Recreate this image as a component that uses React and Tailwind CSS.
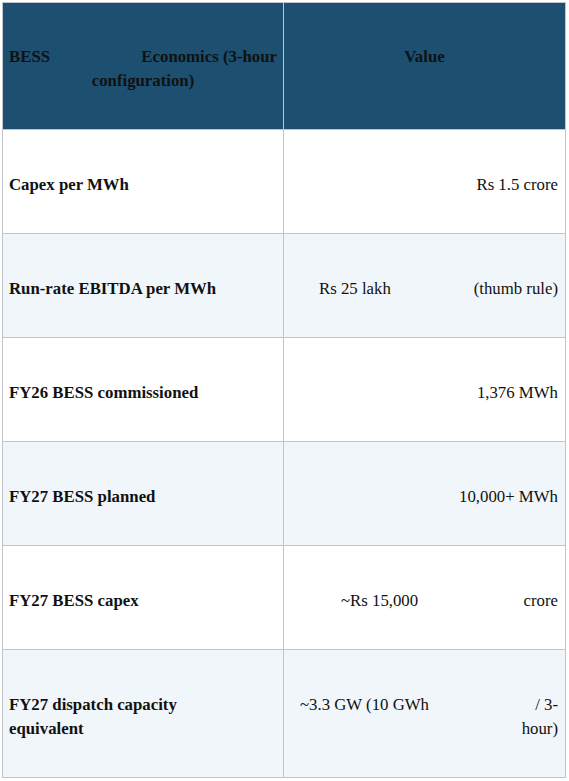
const rows = [
  { label: ["Capex per MWh"], value: <div className="text-right">Rs 1.5 crore</div> },
  {
    label: ["Run-rate EBITDA per MWh"],
    value: (
      <div className="flex justify-between pl-[28px]">
        <span>Rs 25 lakh</span>
        <span>(thumb rule)</span>
      </div>
    ),
  },
  { label: ["FY26 BESS commissioned"], value: <div className="text-right">1,376 MWh</div> },
  { label: ["FY27 BESS planned"], value: <div className="text-right">10,000+ MWh</div> },
  {
    label: ["FY27 BESS capex"],
    value: (
      <div className="flex justify-between pl-[50px]">
        <span>~Rs 15,000</span>
        <span>crore</span>
      </div>
    ),
  },
  {
    label: ["FY27 dispatch capacity", "equivalent"],
    value: (
      <div>
        <div className="flex justify-between pl-[9px]">
          <span>~3.3 GW (10 GWh</span>
          <span>/ 3-</span>
        </div>
        <div className="text-right">hour)</div>
      </div>
    ),
  },
];

export default function App() {
  return (
    <div className="p-[2px] bg-white [font-family:'Liberation_Serif',serif] text-[16.8px] leading-[24px] text-[#111]">
      <table className="w-[564px] border-collapse table-fixed">
        <thead>
          <tr className="bg-[#1c4f70]">
            <th className="w-[281px] border border-[#c2c5c8] px-[6px] pt-[42px] pb-[36px] font-bold align-top">
              <div className="flex justify-between">
                <span>BESS</span>
                <span>Economics (3-hour</span>
              </div>
              <div className="text-center">configuration)</div>
            </th>
            <th className="border border-[#c2c5c8] px-[6px] pt-[42px] pb-[36px] font-bold text-center align-top">
              Value
            </th>
          </tr>
        </thead>
        <tbody>
          {rows.map((row, i) => (
            <tr key={i} className={i % 2 === 1 ? "bg-[#f1f6fa]" : "bg-white"}>
              <td className="border border-[#c2c5c8] px-[6px] pt-[43px] pb-[36px] font-bold align-middle">
                {row.label.map((l) => (
                  <div key={l}>{l}</div>
                ))}
              </td>
              <td className="border border-[#c2c5c8] px-[7px] pt-[43px] pb-[36px] align-middle">
                {row.value}
              </td>
            </tr>
          ))}
        </tbody>
      </table>
    </div>
  );
}
